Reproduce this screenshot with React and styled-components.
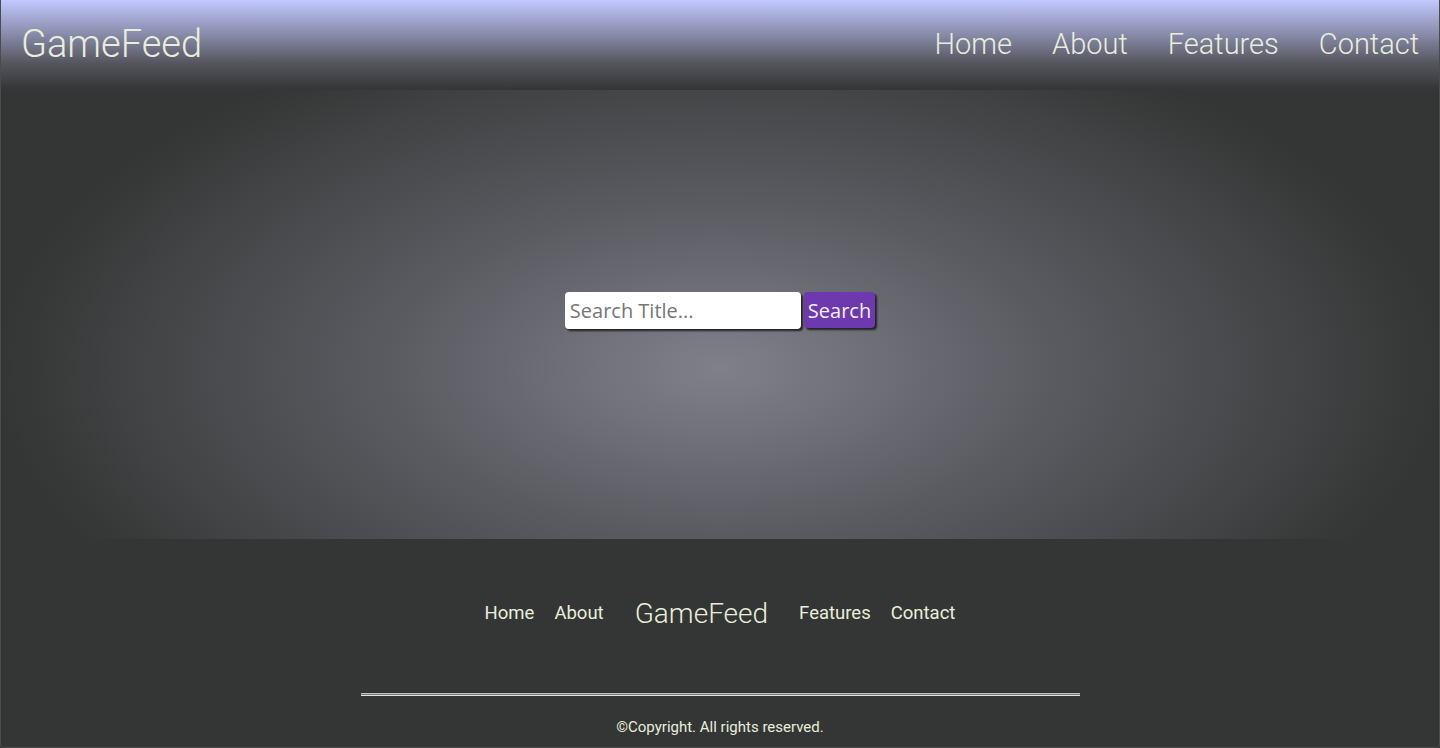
import React from "react";
import styled, { createGlobalStyle } from "styled-components";

const GlobalStyle = createGlobalStyle`
  html, body {
    margin: 0;
    padding: 0;
    background: #343635;
  }
  body {
    font-family: Roboto, "Open Sans", sans-serif;
    color: #e8eedb;
  }
`;

const Page = styled.div`
  min-height: 100vh;
  display: flex;
  flex-direction: column;
  background: #343635;
  box-sizing: border-box;
  border: 1px solid #4a4b4b;
  border-top: none;
  border-radius: 0 0 4px 4px;
  overflow: hidden;
`;

const Header = styled.header`
  height: 12vh;
  display: flex;
  align-items: center;
  justify-content: space-between;
  padding: 0 20px 2px 20px;
  box-sizing: border-box;
  background: linear-gradient(to bottom, #c2c9ff 0%, #8d90b0 35%, #55565e 70%, #343635 100%);
`;

const Logo = styled.a`
  font-size: ${(p) => (p.small ? "28px" : "38px")};
  font-weight: 300;
  color: #e8eedb;
  text-decoration: none;
  margin: ${(p) => (p.small ? "0 21px" : "0")};
`;

const Nav = styled.nav`
  display: flex;
  align-items: center;
  gap: 40px;
`;

const NavLink = styled.a`
  font-size: 29px;
  font-weight: 300;
  color: #e8eedb;
  text-decoration: none;
`;

const Hero = styled.section`
  height: 60vh;
  display: flex;
  align-items: center;
  justify-content: center;
  background: radial-gradient(ellipse 720px 360px at 50% 62%, #80808a 0%, #5b5c62 45%, #343635 100%);
`;

const SearchForm = styled.form`
  display: flex;
  align-items: center;
  gap: 3px;
  margin-bottom: 8px;
`;

const SearchInput = styled.input`
  width: 236px;
  height: 37px;
  box-sizing: border-box;
  border: none;
  border-radius: 4px;
  padding: 0 5px;
  font-family: "Open Sans", sans-serif;
  font-size: 20px;
  color: #333;
  background: #fff;
  box-shadow: 2px 2px 2px #222;
  outline: none;
  &::placeholder {
    color: #767676;
  }
`;

const SearchButton = styled.button`
  height: 36px;
  box-sizing: border-box;
  border: none;
  border-radius: 4px;
  padding: 0 4px;
  font-family: "Open Sans", sans-serif;
  font-size: 20px;
  color: #f1f1f1;
  background: #6c39ae;
  box-shadow: 2px 2px 2px #222;
  cursor: pointer;
`;

const Footer = styled.footer`
  flex: 1;
  display: flex;
  flex-direction: column;
  align-items: center;
  padding-top: 58px;
`;

const FooterNav = styled.nav`
  display: flex;
  align-items: center;
`;

const FooterLink = styled.a`
  font-size: 18.5px;
  font-weight: 400;
  color: #e8eedb;
  text-decoration: none;
  margin: 0 10px;
`;

const Divider = styled.hr`
  width: 50%;
  margin: 63px 0 0 0;
  border: none;
  border-top: 1px solid #bdbdbd;
  border-bottom: 1px solid #e2e2e2;
  height: 1px;
  background: #7a7a7a;
`;

const Copyright = styled.p`
  margin: 22px 0 0 0;
  font-size: 15px;
  font-weight: 400;
  color: #e8eedb;
`;

export default function App() {
  return (
    <>
      <GlobalStyle />
      <Page>
        <Header>
          <Logo href="#">GameFeed</Logo>
          <Nav>
            <NavLink href="#">Home</NavLink>
            <NavLink href="#">About</NavLink>
            <NavLink href="#">Features</NavLink>
            <NavLink href="#">Contact</NavLink>
          </Nav>
        </Header>
        <Hero>
          <SearchForm onSubmit={(e) => e.preventDefault()}>
            <SearchInput type="text" placeholder="Search Title..." />
            <SearchButton type="submit">Search</SearchButton>
          </SearchForm>
        </Hero>
        <Footer>
          <FooterNav>
            <FooterLink href="#">Home</FooterLink>
            <FooterLink href="#">About</FooterLink>
            <Logo small href="#">GameFeed</Logo>
            <FooterLink href="#">Features</FooterLink>
            <FooterLink href="#">Contact</FooterLink>
          </FooterNav>
          <Divider />
          <Copyright>©Copyright. All rights reserved.</Copyright>
        </Footer>
      </Page>
    </>
  );
}
